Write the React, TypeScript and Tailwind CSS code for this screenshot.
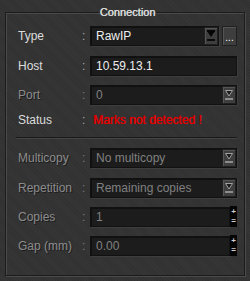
import React from "react";

const font = "font-['Liberation_Sans',Arial,sans-serif]";

const DropArrow = ({ active }: { active?: boolean }) => (
  <svg width="10" height="14" viewBox="0 0 10 14">
    {active ? (
      <>
        <path d="M1 2h8L5 8z" fill="#050505" />
        <rect x="1" y="1" width="8" height="2" fill="#050505" />
        <rect x="1" y="10" width="8" height="2" fill="#0a0a0a" />
      </>
    ) : (
      <>
        <path d="M1.5 2.5h7L5 8z" fill="#1c1c1c" stroke="#a0a0a0" strokeWidth="1" />
        <rect x="1" y="10" width="8" height="2" fill="#8c8c8c" />
      </>
    )}
  </svg>
);

const DropButton = ({ active }: { active?: boolean }) => (
  <div className="w-[14px] h-full flex items-center justify-center bg-[#3e3e3e] border border-[#202020] shadow-[inset_1px_1px_0_#555]">
    <DropArrow active={active} />
  </div>
);

const Spinner = () => (
  <div className="w-[7px] h-[21px] -my-px bg-[#050505] flex flex-col justify-between items-center py-[2px] text-[#d0d0d0] text-[8px] leading-[8px] font-bold">
    <span>+</span>
    <span>=</span>
  </div>
);

type RowProps = {
  label: string;
  disabled?: boolean;
  className?: string;
  children: React.ReactNode;
};

const Row = ({ label, disabled, className = "", children }: RowProps) => (
  <div className={`flex items-center h-5 ${className}`}>
    <span
      className={`w-[64px] text-[12px] ${
        disabled
          ? "text-[#8c8c8c] [text-shadow:1px_1px_0_#1c1c1c]"
          : "text-[#dcdcdc]"
      }`}
    >
      {label}
    </span>
    <span
      className={`w-[8px] text-[12px] ${disabled ? "text-[#7a7a7a]" : "text-[#aaaaaa]"}`}
    >
      :
    </span>
    <div className="flex-1 flex h-full items-stretch">{children}</div>
  </div>
);

const Field = ({
  value,
  disabled,
  children,
}: {
  value: string;
  disabled?: boolean;
  children?: React.ReactNode;
}) => (
  <div className="flex-1 flex items-stretch bg-[#1c1c1c] border border-[#111111] shadow-[inset_1px_1px_0_#101010,1px_1px_0_#3e3e3e]">
    <span
      className={`flex-1 pl-[5px] text-[12px] leading-[18px] ${
        disabled ? "text-[#808080]" : "text-[#eeeeee]"
      }`}
    >
      {value}
    </span>
    {children}
  </div>
);

export default function App() {
  return (
    <div
      className={`w-[250px] h-[281px] bg-[#343434] bg-[repeating-linear-gradient(45deg,#363636_0px,#363636_1px,#313131_1px,#313131_2px)] pt-[6px] ${font}`}
    >
      <fieldset className="mx-[5px] h-[270px] border border-[#1c1c1c] shadow-[inset_1px_1px_0_#4a4a4a,1px_1px_0_#4a4a4a] pl-[12px] pr-[7px]">
        <legend className="mx-auto px-px text-[11px] leading-[13px] text-[#dadada] [text-shadow:0.3px_0_0_#dadada]">
          Connection
        </legend>
        <div className="flex flex-col pt-[7px]">
          <Row label="Type">
            <Field value="RawIP">
              <DropButton active />
            </Field>
            <div className="ml-[3px] w-[15px] bg-[#3e3e3e] border border-[#202020] shadow-[inset_1px_1px_0_#555] flex items-end justify-center text-[10px] leading-[14px] text-white">
              ...
            </div>
          </Row>
          <Row label="Host" className="mt-[10px]">
            <Field value="10.59.13.1" />
          </Row>
          <Row label="Port" disabled className="mt-[9px]">
            <Field value="0" disabled>
              <DropButton />
            </Field>
          </Row>
          <Row label="Status" className="mt-[5px]">
            <span className="pl-[3px] text-[12px] leading-[20px] text-[#e00000] [text-shadow:0.4px_0_0_#e00000]">
              Marks not detected !
            </span>
          </Row>
          <div className="mt-[7px] -ml-[2px] h-0 border-t border-[#1a1a1a] shadow-[0_1px_0_#444]" />
          <Row label="Multicopy" disabled className="mt-[10px]">
            <Field value="No multicopy" disabled>
              <DropButton />
            </Field>
          </Row>
          <Row label="Repetition" disabled className="mt-[10px]">
            <Field value="Remaining copies" disabled>
              <DropButton />
            </Field>
          </Row>
          <Row label="Copies" disabled className="mt-[9px]">
            <Field value="1" disabled />
            <Spinner />
          </Row>
          <Row label="Gap (mm)" disabled className="mt-[9px]">
            <Field value="0.00" disabled />
            <Spinner />
          </Row>
        </div>
      </fieldset>
    </div>
  );
}
